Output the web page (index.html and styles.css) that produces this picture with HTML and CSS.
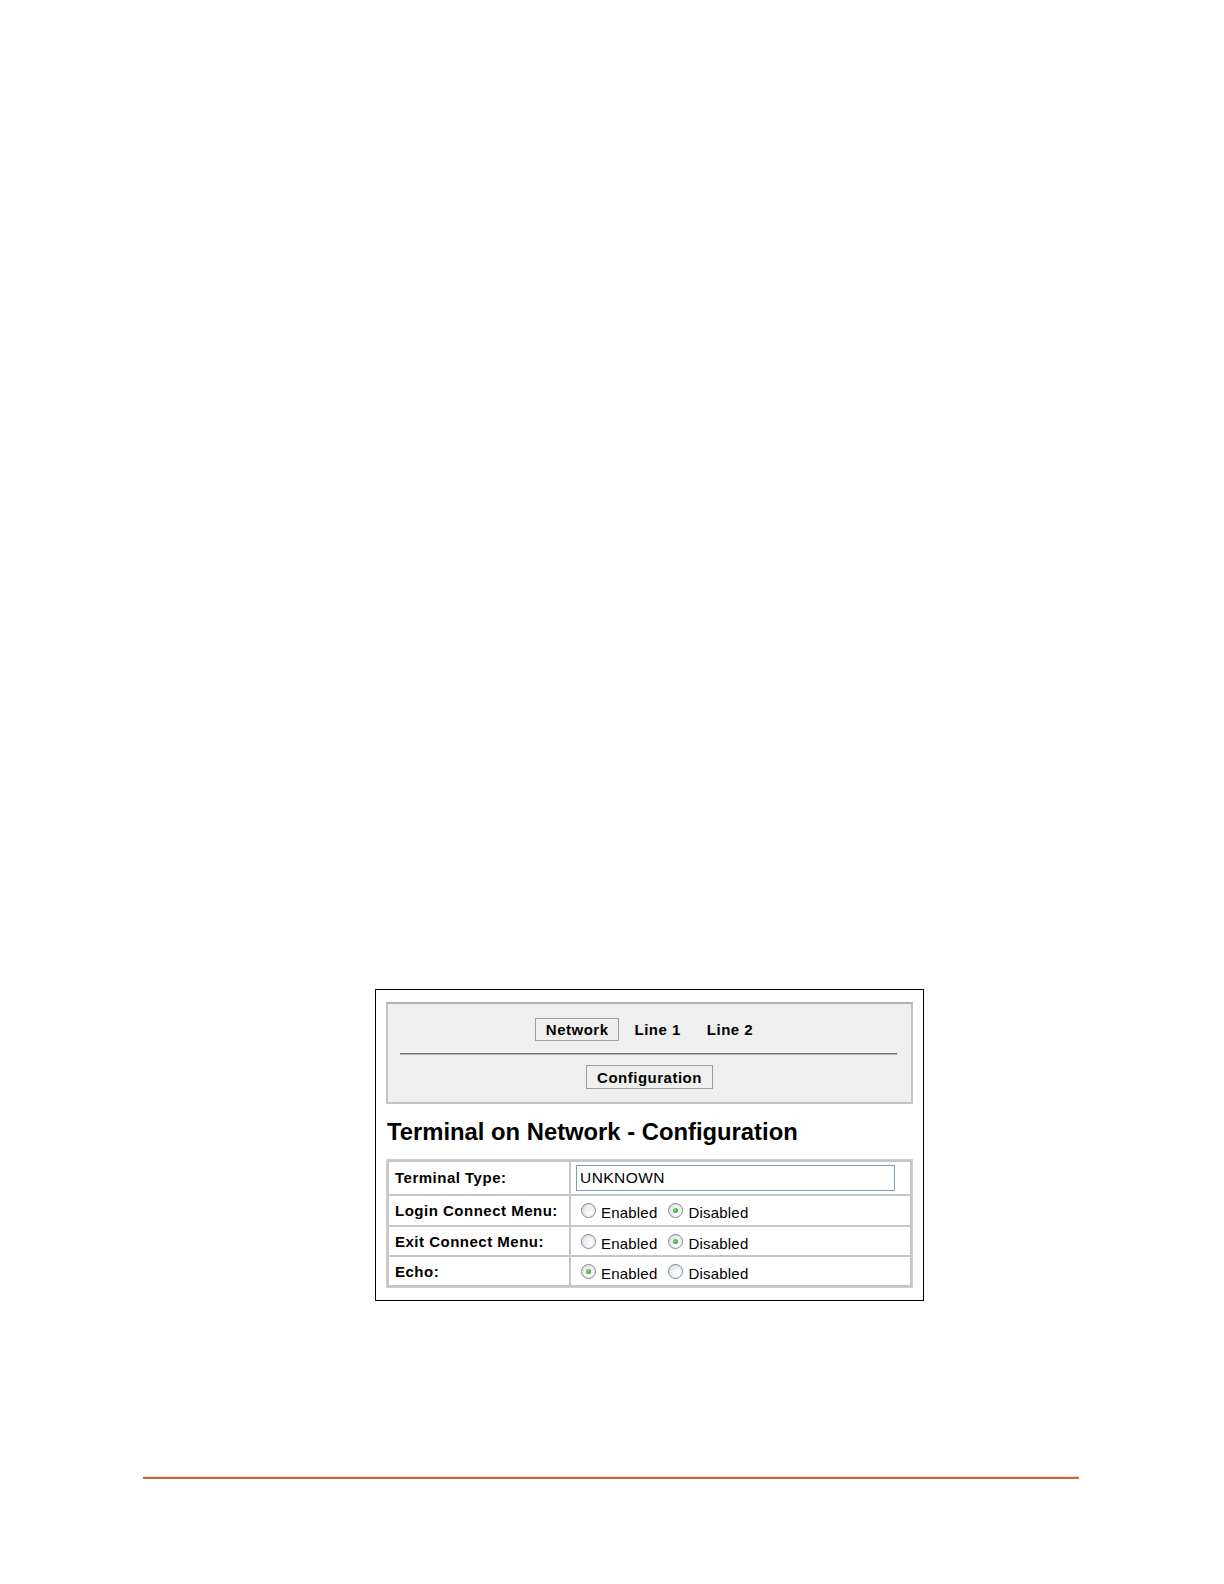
FILE: index.html
```html
<!DOCTYPE html>
<html>
<head>
<meta charset="utf-8">
<link rel="stylesheet" href="styles.css">
</head>
<body>
<div class="page">
  <div class="figure">
    <div class="navpanel">
      <div class="tabs">
        <span class="tab active">Network</span>
        <span class="tab">Line 1</span>
        <span class="tab">Line 2</span>
      </div>
      <div class="sep"></div>
      <div class="subtabs">
        <span class="tab active">Configuration</span>
      </div>
    </div>
    <h1 class="title">Terminal on Network - Configuration</h1>
    <table class="config">
      <tr class="r1">
        <td class="label">Terminal Type:</td>
        <td class="value"><div class="input">UNKNOWN</div></td>
      </tr>
      <tr class="r2">
        <td class="label">Login Connect Menu:</td>
        <td class="value"><span class="radio"></span><span class="rtext">Enabled</span><span class="radio checked"></span><span class="rtext">Disabled</span></td>
      </tr>
      <tr class="r3">
        <td class="label">Exit Connect Menu:</td>
        <td class="value"><span class="radio"></span><span class="rtext">Enabled</span><span class="radio checked"></span><span class="rtext">Disabled</span></td>
      </tr>
      <tr class="r4">
        <td class="label">Echo:</td>
        <td class="value"><span class="radio checked"></span><span class="rtext">Enabled</span><span class="radio"></span><span class="rtext">Disabled</span></td>
      </tr>
    </table>
  </div>
  <div class="footer-rule"></div>
</div>
</body>
</html>
```

FILE: styles.css
```css
html, body {
  margin: 0;
  padding: 0;
  background: #ffffff;
}
body {
  font-family: "Liberation Sans", Arial, sans-serif;
  color: #000;
}
.page {
  padding-top: 989px;
}
.figure {
  margin-left: 375px;
  width: 527px;
  border: 1px solid #000;
  padding: 12px 10px 12px 10px;
}
.navpanel {
  background: #efefef;
  border: 2px solid #c4c4c4;
  border-top-color: #b2b2b2;
  padding: 14px 0 13px 0;
}
.tabs, .subtabs {
  display: flex;
  justify-content: center;
  gap: 4px;
}
.tab {
  display: block;
  height: 21px;
  line-height: 22px;
  padding: 0 10px;
  border: 1px solid transparent;
  font-weight: bold;
  font-size: 15px;
  letter-spacing: 0.5px;
}
.tab.active {
  border-color: #9c9c9c;
}
.subtabs .tab {
  height: 22px;
  line-height: 23px;
}
.sep {
  margin: 12px 14px 10px 12px;
  border-top: 1px solid #707070;
  border-bottom: 1px solid #b8b8b8;
}
.title {
  margin: 14px 0 13px 1px;
  font-size: 23.8px;
  line-height: 28px;
  font-weight: bold;
}
.config {
  width: 527px;
  border-collapse: separate;
  border-spacing: 2px;
  background: #c6c6c6;
  border: 1px solid #cfcfcf;
}
.config td {
  background: #fff;
  padding: 0;
  vertical-align: middle;
}
.config tr.r1 { height: 32px; }
.config tr.r2 { height: 29px; }
.config tr.r3 { height: 28px; }
.config tr.r4 { height: 28px; }
.label {
  width: 174px;
  padding-left: 6px !important;
  font-weight: bold;
  font-size: 15px;
  letter-spacing: 0.5px;
}
.r1 .label {
  padding-bottom: 1px !important;
}
.value {
  padding-left: 5px !important;
  font-size: 15px;
  letter-spacing: 0.2px;
  white-space: nowrap;
}
.input {
  width: 314px;
  height: 24px;
  border: 1px solid #7f9db9;
  line-height: 24px;
  padding-left: 3px;
  font-size: 15.5px;
  letter-spacing: 0.45px;
  box-sizing: content-box;
}
.radio {
  display: inline-block;
  width: 13px;
  height: 13px;
  border: 1px solid #7a8a9e;
  border-radius: 50%;
  background: radial-gradient(circle at 65% 65%, #ffffff 0%, #f0f0f0 45%, #d0d0d0 100%);
  vertical-align: -2px;
  margin-left: 5px;
  margin-right: 5px;
  position: relative;
  box-sizing: content-box;
}
.radio + .rtext + .radio {
  margin-left: 11px;
}
.radio.checked::after {
  content: "";
  position: absolute;
  left: 4px;
  top: 4px;
  width: 5px;
  height: 5px;
  border-radius: 50%;
  background: radial-gradient(circle at 40% 40%, #80e080 0%, #30a030 70%, #208a20 100%);
}
.rtext {
  display: inline-block;
  position: relative;
  top: 2px;
}
.footer-rule {
  margin: 175px 0 0 143px;
  width: 936px;
  height: 2px;
  background: #c6683e;
  border-top: 1px solid #f2d8cb;
}
```
